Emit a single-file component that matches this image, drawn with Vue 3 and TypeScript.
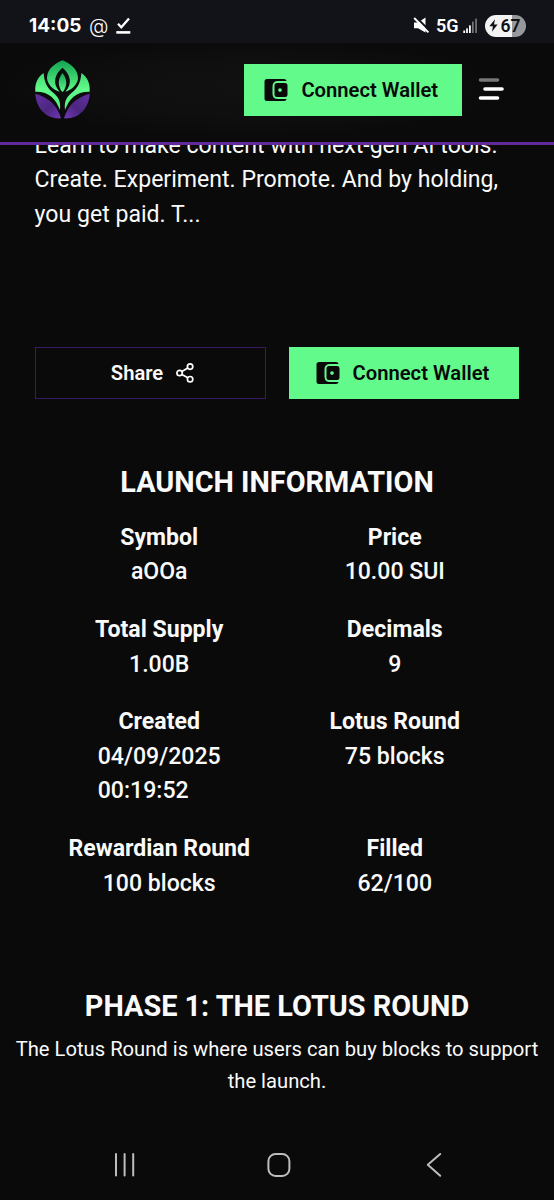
<script setup lang="ts">
interface Fact {
  label: string
  value: string[]
}

const facts: Fact[] = [
  { label: 'Symbol', value: ['aOOa'] },
  { label: 'Price', value: ['10.00 SUI'] },
  { label: 'Total Supply', value: ['1.00B'] },
  { label: 'Decimals', value: ['9'] },
  { label: 'Created', value: ['04/09/2025', '00:19:52'] },
  { label: 'Lotus Round', value: ['75 blocks'] },
  { label: 'Rewardian Round', value: ['100 blocks'] },
  { label: 'Filled', value: ['62/100'] },
]

const description: string[] = [
  'Learn to make content with next-gen AI tools.',
  'Create. Experiment. Promote. And by holding,',
  'you get paid. T...',
]
</script>

<template>
  <div class="screen">
    <div class="status">
      <div class="status-left">
        <span class="clock">14:05</span>
        <span class="at">@</span>
        <svg class="done" width="15" height="18" viewBox="0 0 15 18">
          <path d="M2 6.8 5.3 10.2 13 1.6" fill="none" stroke="#fff" stroke-width="2.3" />
          <path d="M0.3 15.4H14.3" stroke="#fff" stroke-width="2.6" />
        </svg>
      </div>
      <div class="status-right">
        <svg width="17" height="17" viewBox="0 0 17 17">
          <path d="M1 5.500H5L12.500 0.500V15.500L5 11.200H1Z" fill="#fff" />
          <path d="M2.200 -0.800 17 14.200" stroke="#121319" stroke-width="2" />
          <path d="M1.200 1 15.400 15.400" stroke="#fff" stroke-width="1.900" />
        </svg>
        <span class="net">5G</span>
        <svg class="signal" width="15" height="16" viewBox="0 0 15 16">
          <g fill="#fff">
            <rect x="0.3" y="12.5" width="1.8" height="2.5" />
            <rect x="3.1" y="10.4" width="1.8" height="4.6" />
            <rect x="6" y="7.4" width="1.8" height="7.6" />
          </g>
          <rect x="9" y="3.6" width="1.7" height="11.4" fill="#76777b" />
          <rect x="12.2" y="0.6" width="1.7" height="14.4" fill="#76777b" />
        </svg>
        <span class="battery">
          <svg width="9" height="13" viewBox="0 0 9 13">
            <path d="M6 0.2 0.4 7.3H3.9L3 12.8 8.6 5.4H5Z" fill="#111217" />
          </svg>
          <span>67</span>
        </span>
      </div>
    </div>

    <header class="header">
      <svg class="logo" width="57" height="61" viewBox="0 0 171 183">
        <defs>
          <linearGradient id="petal" x1="0" y1="0" x2="0" y2="1">
            <stop offset="0" stop-color="#14a354" />
            <stop offset="1" stop-color="#5dfa87" />
          </linearGradient>
          <linearGradient id="side" x1="0" y1="0" x2="0" y2="1">
            <stop offset="0" stop-color="#43d873" />
            <stop offset="0.45" stop-color="#62fb8b" />
            <stop offset="1" stop-color="#50ed7d" />
          </linearGradient>
          <linearGradient id="root" x1="0" y1="0" x2="1" y2="1">
            <stop offset="0" stop-color="#6330a5" />
            <stop offset="0.55" stop-color="#4c267f" />
            <stop offset="1" stop-color="#7037b7" />
          </linearGradient>
          <g id="half">
            <path d="M29 42C31 73 41 87 56 100C73 114 81 126 78 153C65 119 45 97 4 98C2 73 12 53 29 42Z" fill="url(#side)" />
            <path d="M4 104C42 116 68 134 81 178C36 181 6 146 4 104Z" fill="url(#root)" />
          </g>
        </defs>
        <path
          d="M85.500 4C102 11 132 27 132 57C131 75 116 91 94 98C117 73 109 45 85.500 26C62 45 54 73 77 98C55 91 40 75 39 57C39 27 69 11 85.500 4Z"
          fill="url(#petal)"
        />
        <path d="M85.500 42C101 62 99 80 88 97Q85.500 100 83 97C72 80 70 62 85.500 42Z" fill="url(#petal)" />
        <use href="#half" />
        <use href="#half" transform="translate(171 0) scale(-1 1)" />
      </svg>
      <button class="btn primary top" type="button">
        <svg class="wallet" width="24" height="24" viewBox="0 0 24 24">
          <path d="M3 1H20Q22.200 1 22.600 3H14Q8.500 3 8.500 8.500V15.500Q8.500 21 14 21H22.600Q22.200 23 20 23H3Q0.500 23 0.500 20.500V3.500Q0.500 1 3 1Z" />
          <path fill-rule="evenodd" d="M13 5H21Q23.500 5 23.500 7.500V16.500Q23.500 19 21 19H13Q10.500 19 10.500 16.500V7.500Q10.500 5 13 5ZM16 10.200A1.800 1.800 0 1 0 16.010 10.200Z" />
        </svg>
        <span>Connect Wallet</span>
      </button>
      <svg class="menu" width="26" height="24" viewBox="0 0 26 24">
        <g fill="none" stroke-width="3.600" stroke-linecap="round">
          <path d="M2.500 3H19.500" stroke="#777" />
          <path d="M7 12H24" stroke="#fff" />
          <path d="M2.500 21H19.500" stroke="#fff" />
        </g>
      </svg>
    </header>

    <main>
      <div class="description">
        <p v-for="line in description" :key="line">{{ line }}</p>
      </div>

      <div class="actions">
        <button class="btn share" type="button">
          <span>Share</span>
          <svg width="18" height="20" viewBox="0 0 18 20">
            <g fill="none" stroke="#fff" stroke-width="1.700">
              <circle cx="14.100" cy="3.600" r="2.700" />
              <circle cx="3.600" cy="10" r="2.700" />
              <circle cx="14.100" cy="16.200" r="2.700" />
              <path d="M5.900 8.600 11.800 5M5.900 11.400 11.800 14.800" />
            </g>
          </svg>
        </button>
        <button class="btn primary" type="button">
          <svg class="wallet" width="24" height="24" viewBox="0 0 24 24">
            <path d="M3 1H20Q22.200 1 22.600 3H14Q8.500 3 8.500 8.500V15.500Q8.500 21 14 21H22.600Q22.200 23 20 23H3Q0.500 23 0.500 20.500V3.500Q0.500 1 3 1Z" />
            <path fill-rule="evenodd" d="M13 5H21Q23.500 5 23.500 7.500V16.500Q23.500 19 21 19H13Q10.500 19 10.500 16.500V7.500Q10.500 5 13 5ZM16 10.200A1.800 1.800 0 1 0 16.010 10.200Z" />
          </svg>
          <span>Connect Wallet</span>
        </button>
      </div>

      <h2 class="info-title">LAUNCH INFORMATION</h2>
      <dl class="facts">
        <div v-for="fact in facts" :key="fact.label" class="fact">
          <dt>{{ fact.label }}</dt>
          <dd>
            <div v-for="part in fact.value" :key="part">{{ part }}</div>
          </dd>
        </div>
      </dl>

      <h2 class="phase-title">PHASE 1: THE LOTUS ROUND</h2>
      <p class="phase-text">The Lotus Round is where users can buy blocks to support<br />the launch.</p>
    </main>

    <nav class="navbar">
      <svg width="24" height="26" viewBox="0 0 24 26">
        <path d="M3 2V23.500M11.600 2V23.500M20.200 2V23.500" stroke="#bdbdbd" stroke-width="2" stroke-linecap="round" />
      </svg>
      <svg width="24" height="26" viewBox="0 0 24 26">
        <rect x="1.400" y="2" width="21" height="22" rx="7.200" fill="none" stroke="#bdbdbd" stroke-width="2" />
      </svg>
      <svg width="24" height="26" viewBox="0 0 24 26">
        <path d="M18.200 2 5.800 12.800 18.200 23.800" fill="none" stroke="#bdbdbd" stroke-width="2" stroke-linecap="round" stroke-linejoin="round" />
      </svg>
    </nav>
  </div>
</template>

<style>
html,
body {
  margin: 0;
  background: #0a0a0a;
}
</style>

<style scoped>
.screen {
  width: 554px;
  height: 1200px;
  overflow: hidden;
  display: flex;
  flex-direction: column;
  background: #0a0a0a;
  color: #fafafa;
  font-family: Roboto, 'Liberation Sans', sans-serif;
  font-size: 23.080px;
  line-height: 34.620px;
}
.status {
  flex: none;
  box-sizing: border-box;
  height: 43px;
  padding: 8px 28.500px 0 29px;
  display: flex;
  justify-content: space-between;
  align-items: center;
  background: #121319;
  color: #fff;
}
.status-left,
.status-right {
  display: flex;
  align-items: center;
}
.clock {
  width: 53px;
  font: 700 19px/24px Inter, sans-serif;
}
.at {
  width: 19px;
  margin-left: 7px;
  font: 300 20px/22px Inter, sans-serif;
}
.done {
  margin-left: 8px;
}
.net {
  margin-left: 6px;
  font: 600 18px/24px Roboto, sans-serif;
}
.signal {
  margin-left: 4px;
}
.battery {
  margin-left: 7px;
  box-sizing: border-box;
  width: 41px;
  height: 22px;
  padding: 0 4px;
  border-radius: 11px;
  display: flex;
  align-items: center;
  gap: 3px;
  color: #111217;
  background: linear-gradient(90deg, #f3f3f4 0 66%, #97989b 66%);
  font: 600 17.500px/22px Roboto, sans-serif;
}
.battery svg {
  flex: none;
}
.header {
  flex: none;
  box-sizing: border-box;
  height: 101.500px;
  padding: 15.500px 50px 0 33.500px;
  border-bottom: 3px solid #602a9a;
  display: flex;
  align-items: flex-start;
  background:
    radial-gradient(ellipse 250px 50px at 250px 45px, #111 0%, #0f0f0f 55%, rgba(10, 10, 10, 0) 100%),
    #0a0a0a;
}
.logo {
  flex: none;
}
.btn {
  box-sizing: border-box;
  height: 52px;
  padding: 0;
  border: 0;
  display: flex;
  align-items: center;
  justify-content: center;
  font: 600 20.200px/30px Roboto, sans-serif;
}
.primary {
  padding-right: 3px;
  gap: 13px;
  background: #62fb8b;
  color: #0a0a0a;
}
.primary .wallet {
  flex: none;
  fill: #0a0a0a;
}
.top {
  width: 217.500px;
  margin: 5px 0 0 153.500px;
}
.menu {
  margin: 18.800px 0 0 16px;
}
.description {
  height: 88px;
  padding: 0 34.600px;
  overflow: hidden;
  display: flex;
  flex-direction: column;
  justify-content: flex-end;
}
.description p {
  margin: 0;
  flex: none;
  white-space: nowrap;
}
.actions {
  margin: 114.100px 34.600px 0;
  display: grid;
  grid-template-columns: 1fr 1fr;
  gap: 23px;
}
.share {
  padding-left: 5px;
  gap: 13px;
  border: 1px solid #3a1a62;
  background: transparent;
  color: #fafafa;
}
h2 {
  margin: 0;
  text-align: center;
  font-size: 28.850px;
  line-height: 40.400px;
  font-weight: 700;
}
.info-title {
  margin-top: 63.400px;
}
.facts {
  margin: 18.200px 53px 0;
  display: grid;
  grid-template-columns: 1fr 1fr;
  gap: 23.080px;
}
.fact {
  display: flex;
  flex-direction: column;
  align-items: center;
}
dt {
  font-weight: 700;
}
dd {
  margin: 0;
  font-weight: 500;
}
.phase-title {
  margin-top: 85px;
}
.phase-text {
  margin: 7px 0 0;
  text-align: center;
  white-space: nowrap;
  font-size: 20.200px;
  line-height: 31.700px;
}
.navbar {
  margin-top: auto;
  padding: 0 108px 22.500px 112.500px;
  display: flex;
  justify-content: space-between;
}
</style>
